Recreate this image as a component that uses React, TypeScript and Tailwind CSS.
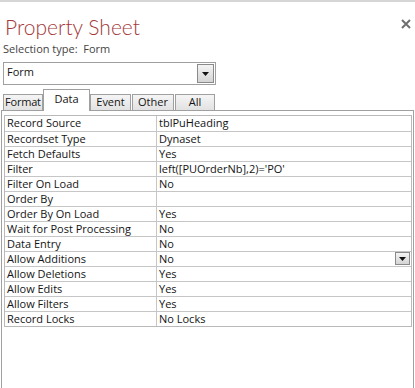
import React from "react";

const rows: [string, string][] = [
  ["Record Source", "tblPuHeading"],
  ["Recordset Type", "Dynaset"],
  ["Fetch Defaults", "Yes"],
  ["Filter", "left([PUOrderNb],2)='PO'"],
  ["Filter On Load", "No"],
  ["Order By", ""],
  ["Order By On Load", "Yes"],
  ["Wait for Post Processing", "No"],
  ["Data Entry", "No"],
  ["Allow Additions", "No"],
  ["Allow Deletions", "Yes"],
  ["Allow Edits", "Yes"],
  ["Allow Filters", "Yes"],
  ["Record Locks", "No Locks"],
];

function Arrow() {
  return (
    <svg width="7" height="4" viewBox="0 0 7 4" className="block">
      <path d="M0 0 H7 L3.5 4 Z" fill="#111" />
    </svg>
  );
}

function DropButton({ cls }: { cls: string }) {
  return (
    <div
      className={`flex items-center justify-center border border-[#8a8a8a] bg-gradient-to-b from-[#f4f4f4] to-[#d4d4d4] ${cls}`}
    >
      <Arrow />
    </div>
  );
}

export default function App() {
  const tabs = ["Format", "Data", "Event", "Other", "All"];
  return (
    <div
      className="w-[415px] h-[388px] overflow-hidden bg-white border-t-2 border-[#d6d6d6] flex flex-col text-[#141414]"
      style={{ fontFamily: '"Open Sans", sans-serif' }}
    >
      <div className="flex items-start justify-between">
        <div
          className="pl-[5px] pt-[11px] text-[21px] leading-[28px] font-light text-[#a4373a]"
          style={{ fontFamily: 'Lato, "Open Sans", sans-serif' }}
        >
          Property Sheet
        </div>
        <svg width="10" height="10" viewBox="0 0 10 10" className="mt-[17px] mr-[4px]">
          <path d="M1 1 L9 9 M9 1 L1 9" stroke="#6f6f6f" strokeWidth="2" />
        </svg>
      </div>
      <div className="ml-[3px] text-[11px] leading-[15px] text-[#444] whitespace-pre">
        Selection type:  Form
      </div>
      <div className="ml-[3px] mt-[6px] w-[213px] h-[23px] border border-[#a0a0a0] flex">
        <div className="flex-1 pl-[3px] text-[11px] leading-[17px]">Form</div>
        <DropButton cls="w-[17px] h-[19px] my-[1px] mr-[1px]" />
      </div>
      <div className="ml-[3px] mt-[4px] h-[22px] flex items-end relative z-10">
        {tabs.map((t) => {
          const sel = t === "Data";
          const w =
            t === "Format"
              ? "w-[40px] text-left pl-[1px] tracking-[-0.2px]"
              : t === "Data"
              ? "w-[47px] text-center"
              : t === "Event"
              ? "w-[41px] text-center"
              : t === "Other"
              ? "w-[42px] ml-[1px] text-center"
              : "w-[40px] ml-[1px] text-center";
          return sel ? (
            <div
              key={t}
              className={`${w} h-[22px] bg-white border-t border-l border-r border-[#a0a0a0] text-[11px] leading-[13px] pt-[2px]`}
            >
              {t}
            </div>
          ) : (
            <div
              key={t}
              className={`${w} h-[17px] overflow-hidden whitespace-nowrap border border-[#a0a0a0] bg-gradient-to-b from-[#f5f5f5] to-[#e2e2e2] text-[11px] leading-[13px]`}
            >
              {t}
            </div>
          );
        })}
      </div>
      <div className="ml-[1px] w-[413px] -mt-px flex-1 border-t border-l border-r border-[#a0a0a0]">
        <div className="mt-[4px] ml-[2px] w-[408px] border border-[#b9b9b9]">
          {rows.map(([k, v], i) => (
            <div
              key={k}
              className={`flex h-[15px] ${i > 0 ? "border-t border-[#c6c6c6]" : ""}`}
            >
              <div className="w-[151px] pl-[2px] text-[11px] leading-[14px] whitespace-nowrap">
                {k}
              </div>
              <div className="flex-1 flex border-l border-[#c6c6c6]">
                <div className="flex-1 pl-[2px] text-[11px] leading-[14px] whitespace-nowrap">
                  {v}
                </div>
                {k === "Allow Additions" && (
                  <DropButton cls="w-[15px] h-[13px] mr-[1px]" />
                )}
              </div>
            </div>
          ))}
        </div>
      </div>
    </div>
  );
}
